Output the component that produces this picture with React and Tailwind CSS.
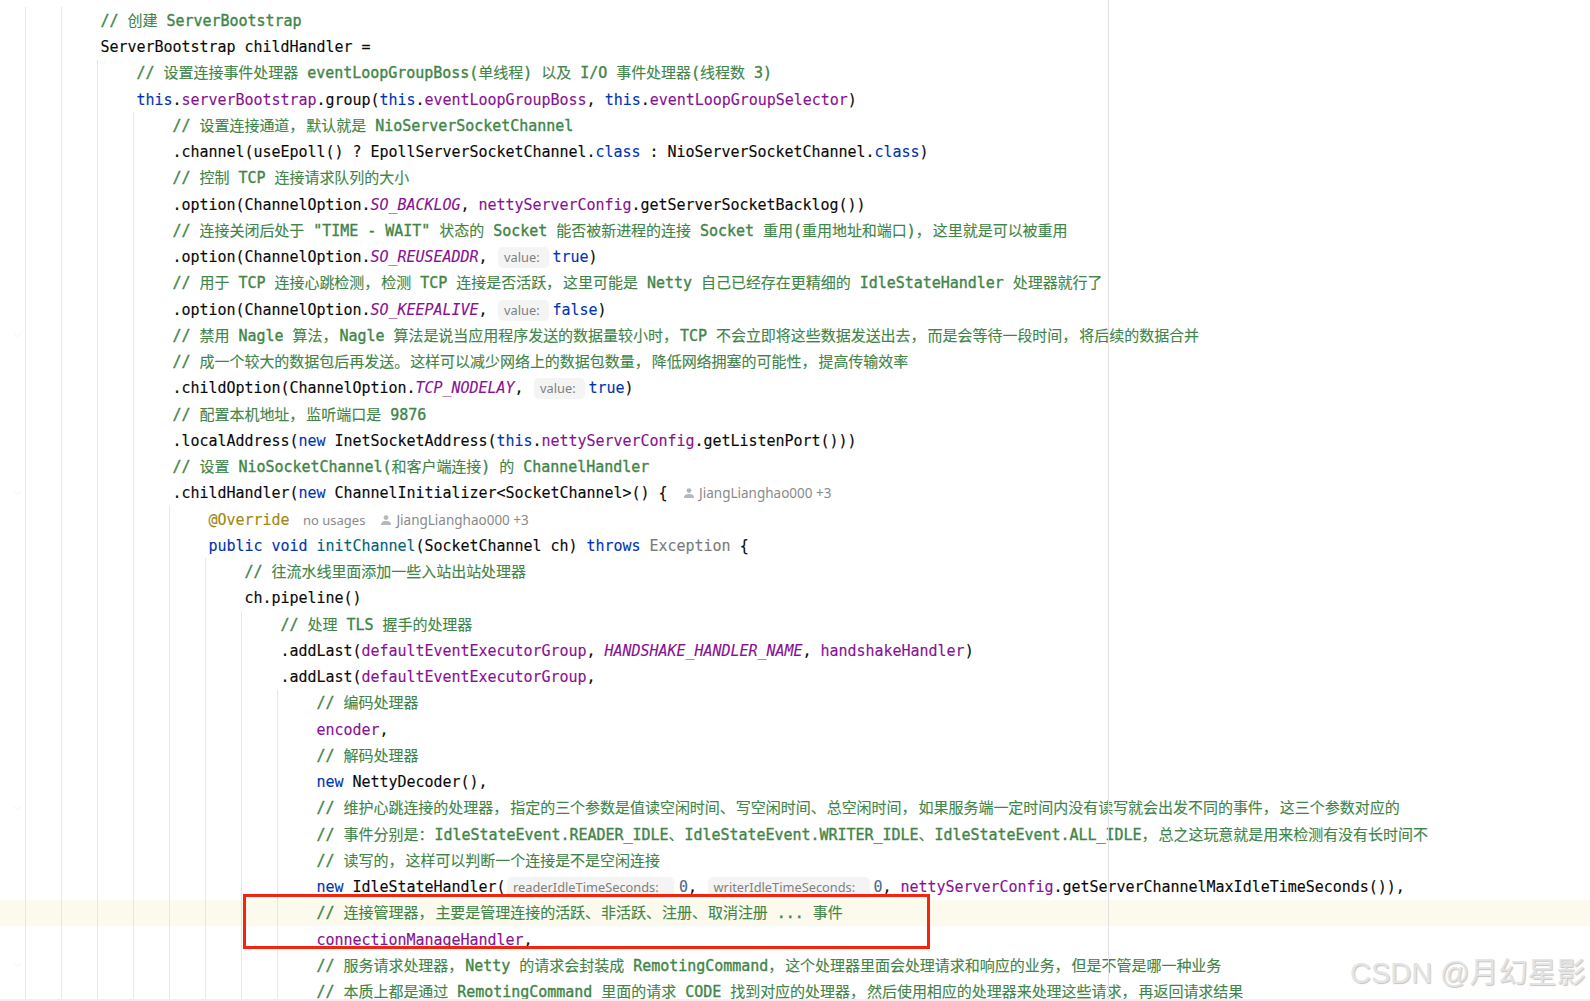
import { ChevronDown } from 'lucide-react';

// comments: latin is drawn heavier than the CJK fallback, and CJK punctuation takes more room
const C = ({ children }) => (
  <span className="text-[#3f8548]">
    {children.split(/([，、。：]|[\x00-\x7f]+)/).filter(Boolean).map((part, i) => {
      if (part === '，') return <span key={i} className="inline-block w-[17px]">{part}</span>;
      if ('、。：'.includes(part)) return <span key={i} className="inline-block w-[16px]">{part}</span>;
      if (/^[\x00-\x7f]/.test(part)) return <span key={i} className="[-webkit-text-stroke:0.35px]">{part}</span>;
      return <span key={i}>{part}</span>;
    })}
  </span>
);
const K = ({ children }) => <span className="text-[#0033b3]">{children}</span>;
const F = ({ children }) => <span className="text-[#871094]">{children}</span>;
const S = ({ children }) => <span className="text-[#871094] italic">{children}</span>;

const Hint = ({ children, width }) => (
  <span className={`inline-flex h-[21px] items-center rounded-[5px] bg-[#f4f4f4] pl-[6px] font-['Noto_Sans',sans-serif] text-[12.8px] tracking-normal text-[#7f7f7f] not-italic [-webkit-text-stroke:0] ${width}`}>
    {children}
  </span>
);

const Author = ({ className }) => (
  <span className={`inline-flex items-center gap-[5px] font-['Noto_Sans',sans-serif] text-[13.5px] tracking-normal text-[#8a8a8a] [-webkit-text-stroke:0] ${className}`}>
    <svg width="10" height="10" viewBox="0 0 10 10" className="fill-[#b4b8be]">
      <circle cx="5" cy="2.6" r="2.4" />
      <path d="M0 10 C0 6.6 2.4 6 5 6 C7.6 6 10 6.6 10 10 Z" />
    </svg>
    JiangLianghao000 +3
  </span>
);

const VALUE = <Hint width="ml-[1.5px] mr-[3.5px] w-[51px]">value:</Hint>;

// [indent, foldable, code]
const ROWS = [
  [2, false, <C>// 创建 ServerBootstrap</C>],
  [2, false, <>ServerBootstrap childHandler =</>],
  [3, false, <C>// 设置连接事件处理器 eventLoopGroupBoss(单线程) 以及 I/O 事件处理器(线程数 3)</C>],
  [3, false, <><K>this</K>.<F>serverBootstrap</F>.group(<K>this</K>.<F>eventLoopGroupBoss</F>, <K>this</K>.<F>eventLoopGroupSelector</F>)</>],
  [4, false, <C>// 设置连接通道，默认就是 NioServerSocketChannel</C>],
  [4, false, <>.channel(useEpoll() ? EpollServerSocketChannel.<K>class</K> : NioServerSocketChannel.<K>class</K>)</>],
  [4, false, <C>// 控制 TCP 连接请求队列的大小</C>],
  [4, false, <>.option(ChannelOption.<S>SO_BACKLOG</S>, <F>nettyServerConfig</F>.getServerSocketBacklog())</>],
  [4, false, <C>// 连接关闭后处于 "TIME - WAIT" 状态的 Socket 能否被新进程的连接 Socket 重用(重用地址和端口)，这里就是可以被重用</C>],
  [4, false, <>.option(ChannelOption.<S>SO_REUSEADDR</S>, {VALUE}<K>true</K>)</>],
  [4, false, <C>// 用于 TCP 连接心跳检测，检测 TCP 连接是否活跃，这里可能是 Netty 自己已经存在更精细的 IdleStateHandler 处理器就行了</C>],
  [4, false, <>.option(ChannelOption.<S>SO_KEEPALIVE</S>, {VALUE}<K>false</K>)</>],
  [4, true, <C>// 禁用 Nagle 算法，Nagle 算法是说当应用程序发送的数据量较小时，TCP 不会立即将这些数据发送出去，而是会等待一段时间，将后续的数据合并</C>],
  [4, false, <C>// 成一个较大的数据包后再发送。这样可以减少网络上的数据包数量，降低网络拥塞的可能性，提高传输效率</C>],
  [4, false, <>.childOption(ChannelOption.<S>TCP_NODELAY</S>, {VALUE}<K>true</K>)</>],
  [4, false, <C>// 配置本机地址，监听端口是 9876</C>],
  [4, false, <>.localAddress(<K>new</K> InetSocketAddress(<K>this</K>.<F>nettyServerConfig</F>.getListenPort()))</>],
  [4, false, <C>// 设置 NioSocketChannel(和客户端连接) 的 ChannelHandler</C>],
  [4, true, <>.childHandler(<K>new</K> ChannelInitializer&lt;SocketChannel&gt;() {'{'}<Author className="ml-[16.5px]" /></>],
  [5, false, <><span className="text-[#9e880d]">@Override</span><span className="ml-[13.5px] font-['Noto_Sans',sans-serif] text-[13px] tracking-normal text-[#8a8a8a] [-webkit-text-stroke:0]">no usages</span><Author className="ml-[16px]" /></>],
  [5, false, <><K>public void</K> <span className="text-[#00627a]">initChannel</span>(SocketChannel ch) <K>throws</K> <span className="text-[#7a7a7a]">Exception</span> {'{'}</>],
  [6, false, <C>// 往流水线里面添加一些入站出站处理器</C>],
  [6, false, <>ch.pipeline()</>],
  [7, false, <C>// 处理 TLS 握手的处理器</C>],
  [7, false, <>.addLast(<F>defaultEventExecutorGroup</F>, <S>HANDSHAKE_HANDLER_NAME</S>, <F>handshakeHandler</F>)</>],
  [7, false, <>.addLast(<F>defaultEventExecutorGroup</F>,</>],
  [8, false, <C>// 编码处理器</C>],
  [8, false, <><F>encoder</F>,</>],
  [8, false, <C>// 解码处理器</C>],
  [8, false, <><K>new</K> NettyDecoder(),</>],
  [8, true, <C>// 维护心跳连接的处理器，指定的三个参数是值读空闲时间、写空闲时间、总空闲时间，如果服务端一定时间内没有读写就会出发不同的事件，这三个参数对应的</C>],
  [8, false, <C>// 事件分别是：IdleStateEvent.READER_IDLE、IdleStateEvent.WRITER_IDLE、IdleStateEvent.ALL_IDLE，总之这玩意就是用来检测有没有长时间不</C>],
  [8, false, <C>// 读写的，这样可以判断一个连接是不是空闲连接</C>],
  [8, false, <><K>new</K> IdleStateHandler(<Hint width="ml-[1.5px] mr-[5px] w-[167px]">readerIdleTimeSeconds:</Hint><span className="text-[#4f6a8a]">0</span>, <Hint width="ml-[1.5px] mr-[4px] w-[162px]">writerIdleTimeSeconds:</Hint><span className="text-[#4f6a8a]">0</span>, <F>nettyServerConfig</F>.getServerChannelMaxIdleTimeSeconds()),</>],
  [8, false, <C>// 连接管理器，主要是管理连接的活跃、非活跃、注册、取消注册 ... 事件</C>],
  [8, false, <><F>connectionManageHandler</F>,</>],
  [8, true, <C>// 服务请求处理器，Netty 的请求会封装成 RemotingCommand，这个处理器里面会处理请求和响应的业务，但是不管是哪一种业务</C>],
  [8, false, <C>// 本质上都是通过 RemotingCommand 里面的请求 CODE 找到对应的处理器，然后使用相应的处理器来处理这些请求，再返回请求结果</C>],
];

const CARET_ROW = 34;

export default function App() {
  return (
    <div className="relative h-[1001px] w-[1590px] overflow-hidden border-b-2 border-[#eeeef6] bg-white pt-[7px] font-['DejaVu_Sans_Mono','Noto_Sans_CJK_SC',monospace] text-[15px] tracking-[-0.03px] text-[#080808]">
      {ROWS.map(([indent, foldable, code], i) => (
        <div key={i} className={`flex h-[26.25px] items-center whitespace-pre ${i === CARET_ROW ? 'bg-[#fcfaed]' : ''}`}>
          <div className="flex h-full w-[25px] shrink-0 items-center justify-end pr-[1px]">
            {foldable && <ChevronDown size={14} strokeWidth={1.5} className="text-[#f0f0f0]" />}
          </div>
          {Array.from({ length: indent }).map((_, n) => (
            <div key={n} className="h-full w-[36px] shrink-0 border-l border-[#e6e6e6]" />
          ))}
          <div className="pt-[2px] pl-[3.5px] [-webkit-text-stroke:0.12px]">{code}</div>
        </div>
      ))}

      {/* right margin */}
      <div className="absolute top-0 bottom-0 left-[1108px] w-px bg-[#e2e2e2]" />

      {/* annotation box */}
      <div className="absolute top-[894px] left-[243px] h-[55px] w-[687px] border-[3px] border-[#f5250d]" />

      {/* watermark */}
      <div className="absolute top-[953px] left-[1350px] font-['Liberation_Sans','Noto_Sans_CJK_SC',sans-serif] text-[29px] leading-[40px] whitespace-pre text-[#e4e4e4] [text-shadow:1px_1px_1px_#c4c4c4]">
        CSDN @月幻星影
      </div>
    </div>
  );
}
